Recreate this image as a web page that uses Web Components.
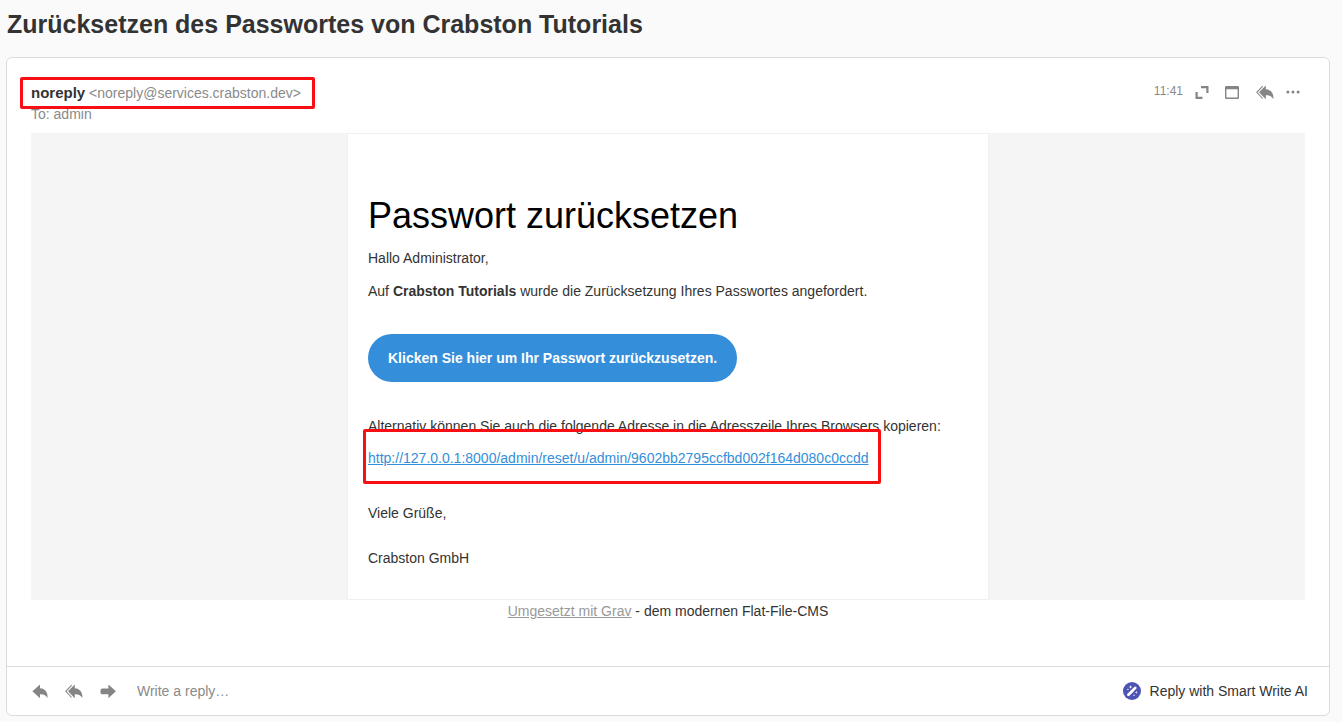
<!DOCTYPE html>
<html lang="de">
<head>
<meta charset="utf-8">
<meta name="viewport" content="width=device-width, initial-scale=1">
<title>Zurücksetzen des Passwortes von Crabston Tutorials</title>
<style>
  body { margin: 0; background: #fafafa; color: #333; font: 14px/20px "Liberation Sans", Arial, sans-serif; }
</style>
</head>
<body>
<mail-thread>
  <span slot="subject">Zurücksetzen des Passwortes von Crabston Tutorials</span>
  <mail-header name="noreply" address="&lt;noreply@services.crabston.dev&gt;" to="To: admin" time="11:41"></mail-header>
  <mail-content></mail-content>
  <reply-bar slot="footer"></reply-bar>
</mail-thread>

<script>
const define = (name, html, setup) => customElements.define(name, class extends HTMLElement {
  constructor() {
    super();
    const t = document.createElement('template');
    t.innerHTML = html;
    this.attachShadow({ mode: 'open' }).append(t.content.cloneNode(true));
  }
  connectedCallback() { if (setup) setup(this, this.shadowRoot); }
});

const ICONS = {
  reply: '<path d="M8 1.4V5.2C13 5.6 16 9 15.5 14.9C13.6 12.1 11.6 11.2 8 11.3V15.2L.4 8.3Z"/>',
  'reply-all': '<path d="M9.8 1.4V5.2C14.6 5.6 17.8 9 17.4 14.9C15.4 12.1 13.2 11.2 9.8 11.3V15.2L3 8.3Z"/><path d="M6.6 2.1L.9 8.3L6.6 14.5" fill="none" stroke="currentColor" stroke-width="1.1"/>',
  forward: '<path d="M2 5.6H8.4V1.4L15.9 8.3L8.4 15.2V11.2H2Q.4 11.2.4 8.4T2 5.6Z"/>',
  expand: '<path d="M7 2H14.5V9H12.3V4.2H7ZM1.5 8H3.7V12.8H8.5V15H1.5Z"/>',
  window: '<path fill-rule="evenodd" d="M2.2 2H13.8Q15 2 15 3.2V13.8Q15 15 13.8 15H2.2Q1 15 1 13.8V3.2Q1 2 2.2 2ZM2.4 5.2V13.6H13.6V5.2Z"/>',
  more: '<circle cx="2.9" cy="8" r="1.5"/><circle cx="8" cy="8" r="1.5"/><circle cx="13.1" cy="8" r="1.5"/>',
  wand: '<circle cx="9" cy="9" r="9" fill="#4d54b5"/><path d="M5.4 12.8L10 8.2" stroke="#fff" stroke-width="2.8" stroke-linecap="round"/><path d="M10.7 7.4L12.3 5.8" stroke="#fff" stroke-width="2.6" stroke-linecap="round"/><path d="M7.6 3.2L8.1 4.5L9.4 5L8.1 5.5L7.6 6.8L7.1 5.5L5.8 5L7.1 4.5ZM13.3 8.8L13.7 9.9L14.8 10.3L13.7 10.7L13.3 11.8L12.9 10.7L11.8 10.3L12.9 9.9Z" fill="#fff"/><circle cx="4.9" cy="7.4" r=".7" fill="#fff"/><circle cx="11" cy="13.2" r=".7" fill="#fff"/>'
};

define('mail-icon', `
<style>
  :host { display: block; flex: none; }
  svg { display: block; fill: currentColor; }
</style>
<svg aria-hidden="true"></svg>`, (el, root) => {
  const name = el.getAttribute('name');
  const w = name === 'reply-all' || name === 'wand' ? 18 : 16;
  const h = name === 'wand' ? 18 : 16;
  const svg = root.querySelector('svg');
  svg.setAttribute('viewBox', `0 0 ${w} ${h}`);
  svg.setAttribute('width', w);
  svg.setAttribute('height', h);
  svg.innerHTML = ICONS[name];
});

define('red-marker', `
<style>
  :host { position: absolute; inset: var(--marker-inset); border: 3px solid #f80f13; border-radius: 2px; box-sizing: border-box; pointer-events: none; }
</style>`);

define('mail-thread', `
<style>
  :host { display: block; padding: 8px 12px 6px 6px; }
  h1 { margin: 0; padding-left: 1px; font-size: 25px; line-height: 32px; }
  article { margin-top: 17px; background: #fff; border: 1px solid #dcdcdc; border-radius: 6px; }
  .message { padding: 24px 24px 44px; }
</style>
<h1><slot name="subject"></slot></h1>
<article>
  <div class="message"><slot></slot></div>
  <slot name="footer"></slot>
</article>`);

define('mail-header', `
<style>
  :host { display: flex; justify-content: space-between; align-items: flex-start; margin-bottom: 9px; color: #8a8a8a; }
  .from { position: relative; line-height: 22px; --marker-inset: -5px -14px -5px -11px; }
  .from b { font-size: 15px; color: #333; }
  .to { line-height: 20px; }
  .tools { display: flex; align-items: flex-end; gap: 11px; padding-right: 4px; }
  time { font-size: 12px; line-height: 18px; }
  button { display: block; padding: 0; border: 0; background: none; color: #858585; }
  .window { margin-left: 3px; }
  .all { margin-left: 5px; }
</style>
<div>
  <div class="from"><b></b> <span></span><red-marker></red-marker></div>
  <div class="to"></div>
</div>
<div class="tools">
  <time></time>
  <button aria-label="Expand"><mail-icon name="expand"></mail-icon></button>
  <button class="window" aria-label="Open in window"><mail-icon name="window"></mail-icon></button>
  <button class="all" aria-label="Reply all"><mail-icon name="reply-all"></mail-icon></button>
  <button aria-label="More"><mail-icon name="more"></mail-icon></button>
</div>`, (el, root) => {
  root.querySelector('b').textContent = el.getAttribute('name');
  root.querySelector('span').textContent = el.getAttribute('address');
  root.querySelector('.to').textContent = el.getAttribute('to');
  root.querySelector('time').textContent = el.getAttribute('time');
});

define('mail-content', `
<style>
  :host { display: block; }
  .backdrop { background: #f5f5f5; }
  .sheet { box-sizing: border-box; max-width: 642px; margin: 0 auto; padding: 61px 20px 31px; background: #fff; border: 1px solid #f0f0f0; }
  h2 { margin: 0 0 11px; font-size: 36px; line-height: 42px; font-weight: 400; color: #000; }
  p { margin: 0 0 13px; }
  .button { display: inline-block; margin: 20px 0 34px; padding: 14px 20px; border-radius: 24px; background: #348eda; color: #fff; font-weight: 700; text-decoration: none; }
  .copy { margin-bottom: 12px; }
  .address { position: relative; display: inline-block; margin-bottom: 35px; color: #348eda; --marker-inset: -19px -12px -16px -5px; }
  .wish { margin-bottom: 25px; }
  .sign { margin: 0; }
  .credit { text-align: center; line-height: 22px; }
  .credit a { color: #999; }
</style>
<div class="backdrop">
  <div class="sheet">
    <h2>Passwort zurücksetzen</h2>
    <p>Hallo Administrator,</p>
    <p>Auf <b>Crabston Tutorials</b> wurde die Zurücksetzung Ihres Passwortes angefordert.</p>
    <div><a class="button" href="#reset">Klicken Sie hier um Ihr Passwort zurückzusetzen.</a></div>
    <p class="copy">Alternativ können Sie auch die folgende Adresse in die Adresszeile Ihres Browsers kopieren:</p>
    <div><a class="address" href="#reset">http://127.0.0.1:8000/admin/reset/u/admin/9602bb2795ccfbd002f164d080c0ccdd<red-marker></red-marker></a></div>
    <p class="wish">Viele Grüße,</p>
    <p class="sign">Crabston GmbH</p>
  </div>
</div>
<div class="credit"><a href="#grav">Umgesetzt mit Grav</a> - dem modernen Flat-File-CMS</div>`);

define('reply-bar', `
<style>
  :host { display: flex; align-items: center; gap: 17px; height: 48px; padding: 0 21px 0 25px; border-top: 1px solid #dcdcdc; color: #858585; }
  button { display: flex; align-items: center; gap: 9px; padding: 0; border: 0; background: none; color: inherit; font: inherit; }
  input { flex: 1; min-width: 0; margin-left: 4px; padding: 0; border: 0; outline: 0; background: none; font: inherit; line-height: 20px; }
  input::placeholder { color: #8a8a8a; opacity: 1; }
  .smart { color: #333; }
</style>
<button aria-label="Reply"><mail-icon name="reply"></mail-icon></button>
<button aria-label="Reply all"><mail-icon name="reply-all"></mail-icon></button>
<button aria-label="Forward"><mail-icon name="forward"></mail-icon></button>
<input type="text" aria-label="Write a reply" placeholder="Write a reply…">
<button class="smart"><mail-icon name="wand"></mail-icon>Reply with Smart Write AI</button>`);
</script>
</body>
</html>
